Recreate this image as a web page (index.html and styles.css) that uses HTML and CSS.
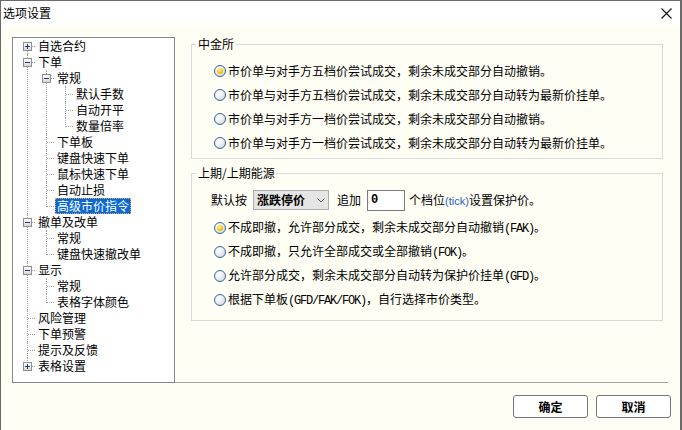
FILE: index.html
```html
<!DOCTYPE html>
<html lang="zh-CN">
<head>
	<meta charset="UTF-8">
	<title>选项设置</title>
	<link rel="stylesheet" href="styles.css">
</head>
<body>
	<div class="dialog">
		<header class="caption">
			<span>选项设置</span>
			<svg class="close" width="11" height="11" viewBox="0 0 11 11">
				<path d="M0.5 0.5L10.5 10.5M10.5 0.5L0.5 10.5" stroke="#111" stroke-width="1.1" fill="none"/>
			</svg>
		</header>

		<main class="body">
			<aside class="tree-box">
				<ul class="tree">
					<li><div class="row"><span class="twist"><b class="box plus"></b></span><span class="label">自选合约</span></div></li>
					<li><div class="row"><span class="twist"><b class="box"></b></span><span class="label">下单</span></div>
						<ul>
							<li><div class="row"><span class="twist"><b class="box"></b></span><span class="label">常规</span></div>
								<ul>
									<li><div class="row"><span class="twist"></span><span class="label">默认手数</span></div></li>
									<li><div class="row"><span class="twist"></span><span class="label">自动开平</span></div></li>
									<li><div class="row"><span class="twist"></span><span class="label">数量倍率</span></div></li>
								</ul>
							</li>
							<li><div class="row"><span class="twist"></span><span class="label">下单板</span></div></li>
							<li><div class="row"><span class="twist"></span><span class="label">键盘快速下单</span></div></li>
							<li><div class="row"><span class="twist"></span><span class="label">鼠标快速下单</span></div></li>
							<li><div class="row"><span class="twist"></span><span class="label">自动止损</span></div></li>
							<li><div class="row"><span class="twist"></span><span class="label selected">高级市价指令</span></div></li>
						</ul>
					</li>
					<li><div class="row"><span class="twist"><b class="box"></b></span><span class="label">撤单及改单</span></div>
						<ul>
							<li><div class="row"><span class="twist"></span><span class="label">常规</span></div></li>
							<li><div class="row"><span class="twist"></span><span class="label">键盘快速撤改单</span></div></li>
						</ul>
					</li>
					<li><div class="row"><span class="twist"><b class="box"></b></span><span class="label">显示</span></div>
						<ul>
							<li><div class="row"><span class="twist"></span><span class="label">常规</span></div></li>
							<li><div class="row"><span class="twist"></span><span class="label">表格字体颜色</span></div></li>
						</ul>
					</li>
					<li><div class="row"><span class="twist"></span><span class="label">风险管理</span></div></li>
					<li><div class="row"><span class="twist"></span><span class="label">下单预警</span></div></li>
					<li><div class="row"><span class="twist"></span><span class="label">提示及反馈</span></div></li>
					<li><div class="row"><span class="twist"><b class="box plus"></b></span><span class="label">表格设置</span></div></li>
				</ul>
			</aside>

			<section class="pane">
				<fieldset class="group cffex">
					<legend>中金所</legend>
					<label class="opt"><input type="radio" name="cffex" checked><span>市价单与对手方五档价尝试成交，剩余未成交部分自动撤销。</span></label>
					<label class="opt"><input type="radio" name="cffex"><span>市价单与对手方五档价尝试成交，剩余未成交部分自动转为最新价挂单。</span></label>
					<label class="opt"><input type="radio" name="cffex"><span>市价单与对手方一档价尝试成交，剩余未成交部分自动撤销。</span></label>
					<label class="opt"><input type="radio" name="cffex"><span>市价单与对手方一档价尝试成交，剩余未成交部分自动转为最新价挂单。</span></label>
				</fieldset>

				<fieldset class="group shfe">
					<legend>上期/上期能源</legend>
					<div class="limit">
						<span>默认按</span>
						<span class="combo">
							<b>涨跌停价</b>
							<svg width="8" height="5" viewBox="0 0 8 5"><path d="M0.5 0.5L4 4L7.5 0.5" stroke="#555" fill="none"/></svg>
						</span>
						<span>追加</span>
						<span class="spin">0</span>
						<span>个档位<em class="tick">(tick)</em>设置保护价。</span>
					</div>
					<label class="opt"><input type="radio" name="shfe" checked><span>不成即撤，允许部分成交，剩余未成交部分自动撤销<i class="asc">(FAK)</i>。</span></label>
					<label class="opt"><input type="radio" name="shfe"><span>不成即撤，只允许全部成交或全部撤销<i class="asc">(FOK)</i>。</span></label>
					<label class="opt"><input type="radio" name="shfe"><span>允许部分成交，剩余未成交部分自动转为保护价挂单<i class="asc">(GFD)</i>。</span></label>
					<label class="opt"><input type="radio" name="shfe"><span>根据下单板<i class="asc">(GFD/FAK/FOK)</i>，自行选择市价类型。</span></label>
				</fieldset>
			</section>
		</main>

		<footer class="buttons">
			<button>确定</button>
			<button>取消</button>
		</footer>
	</div>
</body>
</html>
```

FILE: styles.css
```css
* {
	box-sizing: border-box;
}
body {
	margin: 0;
	font: 12px/16px "Noto Sans CJK SC", sans-serif;
	color: #000;
}

/* window */
.dialog {
	width: 682px;
	height: 430px;
	background: #fefef4;
	border: 1px solid #6b6b6b;
	border-right-width: 2px;
	border-bottom: none;
	display: flex;
	flex-direction: column;
}
.caption {
	height: 24px;
	background: #fff;
	display: flex;
	align-items: center;
	justify-content: space-between;
	padding: 0 8px 0 2px;
}
.body {
	display: flex;
	padding: 12px 12px 0 11px;
}

/* tree */
.tree-box {
	width: 163px;
	height: 346px;
	background: #fff;
	border: 1px solid #828790;
}
.tree, .tree ul {
	list-style: none;
	margin: 0;
	padding: 0 0 0 19px;
}
.tree {
	padding-left: 5px;
}
.tree li {
	position: relative;
}
.tree li::before {
	content: "";
	position: absolute;
	left: 9px;
	top: 0;
	bottom: 0;
	border-left: 1px dotted #a0a0a0;
}
.tree li:last-child::before {
	bottom: auto;
	height: 9px;
}
.tree > li:first-child::before {
	top: 8px;
	bottom: 0;
	height: auto;
}
.row {
	display: flex;
	height: 16px;
}
.twist {
	position: relative;
	width: 18px;
	height: 16px;
	padding: 4px 0 0 5px;
	background: repeating-linear-gradient(90deg, #a0a0a0 0 1px, transparent 1px 2px) 10px 8px / 8px 1px no-repeat;
}
.box {
	display: block;
	position: relative;
	width: 9px;
	height: 9px;
	border: 1px solid #8f8f8f;
	background: linear-gradient(#fff, #d6d6d6);
}
.box::before, .box.plus::after {
	content: "";
	position: absolute;
	background: #1f3c7a;
}
.box::before {
	left: 1px; top: 3px;
	width: 5px; height: 1px;
}
.box.plus::after {
	left: 3px; top: 1px;
	width: 1px; height: 5px;
}
.label {
	line-height: 14px;
	padding: 0 1px;
	border: 1px solid transparent;
	white-space: nowrap;
}
.label.selected {
	background: #0a68d4;
	color: #fff;
	border: 1px dotted #e9a45a;
}

/* right pane */
.pane {
	width: 493px;
	height: 346px;
	padding-left: 16px;
	border-bottom: 1px solid #a3a3a3;
}
.group {
	width: 472px;
	margin: 0;
	padding: 8px 0 3px 0;
	border: 1px solid #d9d9d9;
}
.group legend {
	margin-left: 4px;
	padding: 0 2px;
	line-height: 14px;
}
.group.shfe {
	margin-top: 7px;
	padding: 9px 0 8px 0;
}
.opt {
	display: flex;
	align-items: center;
	height: 24px;
	padding-left: 22px;
	white-space: nowrap;
}
.opt input {
	appearance: none;
	position: relative;
	width: 12px;
	height: 12px;
	margin: 0 2px 0 0;
	border: 1px solid #3a6596;
	border-radius: 50%;
	background: radial-gradient(circle at 35% 30%, #fff 0, #eef1f4 40%, #c5ced9 100%);
}
.opt input:checked::after {
	content: "";
	position: absolute;
	left: 2px;
	top: 2px;
	width: 6px;
	height: 6px;
	border-radius: 50%;
	background: radial-gradient(circle at 40% 35%, #fff6a0 0, #f6c800 55%, #d58e00 100%);
}
.asc {
	font: normal 12px/16px "Liberation Mono", monospace;
	letter-spacing: -1.2px;
}
.limit {
	display: flex;
	align-items: center;
	height: 22px;
	padding-left: 19px;
	margin-bottom: 5px;
	white-space: nowrap;
}
.combo {
	display: flex;
	align-items: center;
	justify-content: space-between;
	width: 76px;
	height: 20px;
	margin: 0 8px 0 6px;
	padding: 0 3px 0 3px;
	background: #e5e5e5;
	border: 1px solid #adadad;
}
.spin {
	width: 38px;
	height: 21px;
	margin: 0 4px 0 6px;
	padding-left: 3px;
	background: #fff;
	border: 1px solid #7a7a7a;
	font: bold 12px/19px "Liberation Mono", monospace;
}
.tick {
	font: normal 11px/16px "Liberation Sans", sans-serif;
	color: #1f62c6;
}

/* footer */
.buttons {
	display: flex;
	justify-content: flex-end;
	gap: 8px;
	padding: 12px 9px 0 0;
}
.buttons button {
	width: 75px;
	height: 23px;
	padding: 0;
	font: bold 12px/16px "Noto Sans CJK SC", sans-serif;
	color: #000;
	background: #fff;
	border: 1px solid #767676;
	border-radius: 3px;
}
```
